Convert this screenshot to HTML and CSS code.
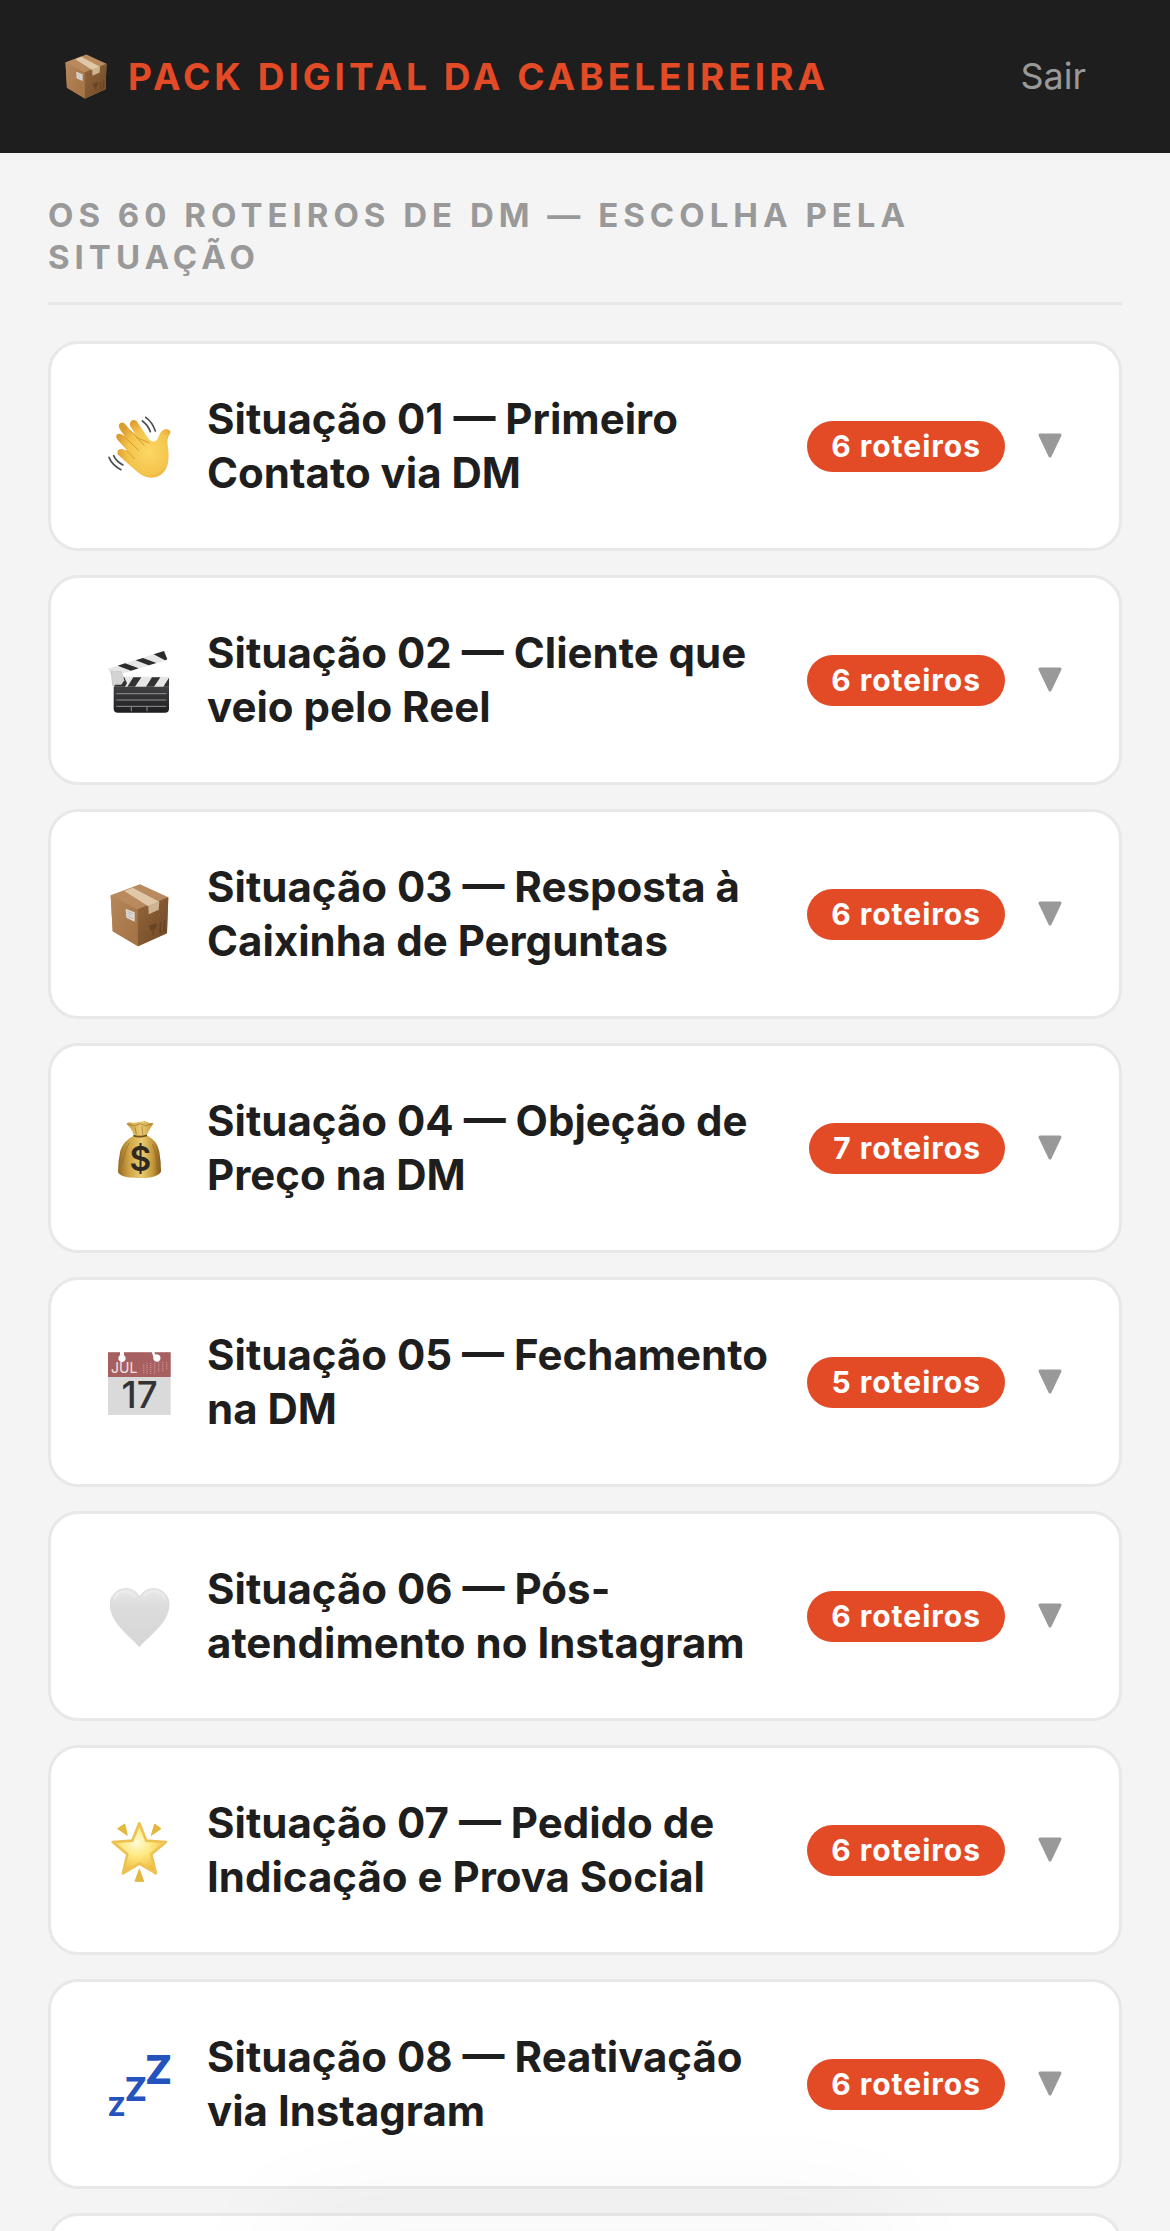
FILE: index.html
```html
<!DOCTYPE html>
<html lang="pt-BR">
  <head>
    <meta charset="UTF-8">
    <meta name="viewport" content="width=device-width, initial-scale=1">
    <title>Pack Digital da Cabeleireira</title>
    <link rel="stylesheet" href="styles.css">
  </head>
  <body>
    <!-- Shared shapes -->
    <svg class="defs" aria-hidden="true">
      <defs>
        <linearGradient id="boxLeft" x1="0" y1="0" x2="1" y2="1">
          <stop offset="0" stop-color="#b5875a"/>
          <stop offset="1" stop-color="#a27144"/>
        </linearGradient>
        <linearGradient id="boxRight" x1="0" y1="0" x2="1" y2="1">
          <stop offset="0" stop-color="#94663c"/>
          <stop offset="1" stop-color="#6e4825"/>
        </linearGradient>
      </defs>
      <symbol id="box" viewBox="60 56 177 190">
        <path d="M62 91L150 58L235 97L231 205L144 244L68 199Z" fill="#b88a5e"/>
        <path d="M62 91L142 133L144 244L68 199Z" fill="url(#boxLeft)"/>
        <path d="M142 133L235 97L231 205L144 244Z" fill="url(#boxRight)"/>
        <path d="M103 78L128 68L208 110L175 124Z" fill="#dfc7a8"/>
        <path d="M175 123L208 109L206 134L176 148Z" fill="#cdb491"/>
        <path d="M107 131L134 142V170L109 158Z" fill="#dedbd6"/>
        <path d="M112 139L130 147M112 145L124 151M112 153L130 161" stroke="#a8a49e" stroke-width="2"/>
        <g opacity=".6">
          <path d="M177 182L201 174C200 188 195 194 191 196V207L197 206L185 212L188 208V197C181 196 177 190 177 182Z" fill="#58391e"/>
          <path d="M212 170L210 200M224 165L222 196M208 203L215 200M220 198L226 195" stroke="#58391e" stroke-width="4"/>
        </g>
      </symbol>
      <symbol id="arrow" viewBox="0 0 30 30">
        <path d="M5 4H25L15 25Z" fill="currentColor" stroke="currentColor" stroke-width="3" stroke-linejoin="round"/>
      </symbol>
    </svg>

    <header class="header">
      <div class="brand">
        <svg class="brand-icon" aria-hidden="true"><use href="#box"/></svg>
        <span>PACK DIGITAL DA CABELEIREIRA</span>
      </div>
      <button class="logout" type="button">Sair</button>
    </header>

    <main class="content">
      <h1 class="section-title">OS 60 ROTEIROS DE DM — ESCOLHA PELA SITUAÇÃO</h1>

      <div class="list">
        <button class="card" type="button" aria-expanded="false">
          <svg class="icon" viewBox="195 240 216 216" aria-hidden="true">
            <defs>
              <radialGradient id="hand" cx=".6" cy=".55" r=".6">
                <stop offset="0" stop-color="#fbd864"/>
                <stop offset=".65" stop-color="#f4c44c"/>
                <stop offset="1" stop-color="#dc9e30"/>
              </radialGradient>
            </defs>
            <path d="M240 280C247 275 253 279 257 284L276 306L287 314L270 287C268 272 280 265 290 274L322 321C329 332 338 338 347 333C356 328 357 304 372 299C384 295 394 302 391 309C385 319 381 328 383 345C387 370 388 399 378 416C367 438 344 446 322 442C307 438 294 428 281 416L235 375C227 363 238 353 249 358L262 362L233 330C224 318 230 308 242 312L254 318L241 300C235 291 235 284 240 280Z" fill="url(#hand)"/>
            <path d="M272 302L312 345M256 323L296 361M260 363L284 386M290 323L327 338" fill="none" stroke="#d99a32" stroke-width="3" stroke-linecap="round"/>
            <path d="M307 273Q323 284 331 305M317 262Q337 276 346 303M221 377Q229 395 249 405M207 382Q217 406 243 419" fill="none" stroke="#4c4c50" stroke-width="5" stroke-linecap="round"/>
          </svg>
          <span class="title">Situação 01 — Primeiro Contato via DM</span>
          <span class="badge">6 roteiros</span>
          <svg class="arrow" aria-hidden="true"><use href="#arrow"/></svg>
        </button>

        <button class="card" type="button" aria-expanded="false">
          <svg class="icon" viewBox="45 42 216 216" aria-hidden="true">
            <defs>
              <linearGradient id="slate" x1="0" y1="0" x2="0" y2="1">
                <stop offset="0" stop-color="#414143"/>
                <stop offset="1" stop-color="#1e1e20"/>
              </linearGradient>
            </defs>
            <path d="M54 116L222 63L232 90L66 140Z" fill="#e6e6e6"/>
            <path d="M83 107L105 100L146 115L123 122ZM137 91L159 84L199 99L176 106ZM191 73L222 63L232 88L225 91Z" fill="#2b2b2d"/>
            <path d="M62 122L94 124L106 152L100 167L67 168Z" fill="#c9c9ca"/>
            <path d="M70 168V140H238V172H72Z" fill="#e6e6e6"/>
            <path d="M112 170L130 142H154L135 170ZM168 170L186 142H211L192 170ZM220 170L237 143V170ZM84 142H103L111 160L105 170H72Z" fill="#323234"/>
            <path d="M66 124L96 127L103 151L94 164L69 164Z" fill="#d3d3d4"/>
            <path d="M71 170H237V236Q237 248 225 248H84Q71 248 71 236Z" fill="url(#slate)"/>
            <path d="M79 191H229M79 210H229M79 229H229M124 229V244M171 229V244" stroke="#929292" stroke-width="3"/>
          </svg>
          <span class="title">Situação 02 — Cliente que veio pelo Reel</span>
          <span class="badge">6 roteiros</span>
          <svg class="arrow" aria-hidden="true"><use href="#arrow"/></svg>
        </button>

        <button class="card" type="button" aria-expanded="false">
          <svg class="icon" viewBox="45 39 216 216" aria-hidden="true">
            <use href="#box" x="60" y="56" width="177" height="190"/>
          </svg>
          <span class="title">Situação 03 — Resposta à Caixinha de Perguntas</span>
          <span class="badge">6 roteiros</span>
          <svg class="arrow" aria-hidden="true"><use href="#arrow"/></svg>
        </button>

        <button class="card" type="button" aria-expanded="false">
          <svg class="icon" viewBox="45 36 216 216" aria-hidden="true">
            <defs>
              <linearGradient id="bag">
                <stop offset="0" stop-color="#94671f"/>
                <stop offset=".25" stop-color="#cda345"/>
                <stop offset=".55" stop-color="#ebcb72"/>
                <stop offset=".8" stop-color="#c59a3c"/>
                <stop offset="1" stop-color="#835818"/>
              </linearGradient>
            </defs>
            <path d="M109 72Q116 63 128 69L151 65L164 63L178 69L191 70Q179 86 170 106Q202 122 208 155Q213 184 213 215Q203 234 151 234Q93 235 84 217Q84 181 91 152Q102 120 132 107Q126 85 109 72Z" fill="url(#bag)"/>
            <path d="M130 107Q149 113 171 106" fill="none" stroke="#735019" stroke-width="5"/>
            <path d="M113 72L132 78L150 71L167 77L187 71M135 82L139 103M156 78L158 104M118 129Q103 153 98 190M187 132Q201 164 202 207" fill="none" stroke="#8c6424" stroke-width="3" opacity=".6"/>
            <text class="money" x="151" y="213" text-anchor="middle">$</text>
          </svg>
          <span class="title">Situação 04 — Objeção de Preço na DM</span>
          <span class="badge">7 roteiros</span>
          <svg class="arrow" aria-hidden="true"><use href="#arrow"/></svg>
        </button>

        <button class="card" type="button" aria-expanded="false">
          <svg class="icon" viewBox="45 33 216 216" aria-hidden="true">
            <path d="M54 52H242V240H54Z" fill="#dadada"/>
            <path d="M54 52H242V126H54Z" fill="#a85f60"/>
            <path d="M90 50H102V61A11 11 0 1 1 90 61ZM185 50H193L196 59A11 11 0 1 1 190 66Z" fill="#fff"/>
            <path d="M161 88V116M171 85V117M182 84V117M194 83V116M206 82V111M218 82V110M230 82V106" stroke="#c79494" stroke-width="4" stroke-dasharray="3 3"/>
            <text class="month" x="63" y="115">JUL</text>
            <text class="day" x="149" y="220" text-anchor="middle">17</text>
          </svg>
          <span class="title">Situação 05 — Fechamento na DM</span>
          <span class="badge">5 roteiros</span>
          <svg class="arrow" aria-hidden="true"><use href="#arrow"/></svg>
        </button>

        <button class="card" type="button" aria-expanded="false">
          <svg class="icon" viewBox="45 30 216 216" aria-hidden="true">
            <defs>
              <linearGradient id="heart" x1="0" y1="0" x2="0" y2="1">
                <stop offset="0" stop-color="#e9e9e9"/>
                <stop offset=".3" stop-color="#dcdcdc"/>
                <stop offset="1" stop-color="#d6d6d6"/>
              </linearGradient>
            </defs>
            <path d="M148 230C118 196 61 158 61 103C61 53 126 38 149 81C172 38 237 53 237 103C237 158 178 196 148 230Z" fill="url(#heart)" stroke="#d0d0d0" stroke-width="2"/>
            <path d="M74 86C84 62 117 56 134 80M164 78C181 56 215 61 224 86" fill="none" stroke="#ededed" stroke-width="5" stroke-linecap="round"/>
          </svg>
          <span class="title">Situação 06 — Pós-atendimento no Instagram</span>
          <span class="badge">6 roteiros</span>
          <svg class="arrow" aria-hidden="true"><use href="#arrow"/></svg>
        </button>

        <button class="card" type="button" aria-expanded="false">
          <svg class="icon" viewBox="45 42 216 216" aria-hidden="true">
            <defs>
              <radialGradient id="star" cx=".45" cy=".38" r=".65">
                <stop offset="0" stop-color="#fffbd8"/>
                <stop offset=".4" stop-color="#feea86"/>
                <stop offset="1" stop-color="#efb331"/>
              </radialGradient>
            </defs>
            <path d="M148 70L169 122L228 126L184 163L198 220L148 191L99 220L112 163L68 126L127 122Z" fill="url(#star)" stroke="#eec252" stroke-width="8" stroke-linejoin="round"/>
            <path d="M83 86L104 72L112 106ZM194 72L213 86L184 106ZM148 208L161 244H135Z" fill="#e3b83f" stroke="#e3b83f" stroke-width="3" stroke-linejoin="round"/>
          </svg>
          <span class="title">Situação 07 — Pedido de Indicação e Prova Social</span>
          <span class="badge">6 roteiros</span>
          <svg class="arrow" aria-hidden="true"><use href="#arrow"/></svg>
        </button>

        <button class="card" type="button" aria-expanded="false">
          <svg class="icon sleep" viewBox="45 39 216 216" aria-hidden="true">
            <text x="53" y="243" font-size="78">Z</text>
            <text x="104" y="198" font-size="98">Z</text>
            <text x="165" y="147" font-size="120">Z</text>
          </svg>
          <span class="title">Situação 08 — Reativação via Instagram</span>
          <span class="badge">6 roteiros</span>
          <svg class="arrow" aria-hidden="true"><use href="#arrow"/></svg>
        </button>

        <div class="card"></div>
      </div>
    </main>

    <div class="bottom-shadow"></div>
  </body>
</html>
```

FILE: styles.css
```css
* {
  box-sizing: border-box;
  margin: 0;
  padding: 0;
}

body {
  height: 100vh;
  overflow: hidden;
  background: #f4f4f4;
  color: #1e1e1e;
  font-family: Inter, 'Liberation Sans', sans-serif;
}

button {
  font-family: inherit;
  border: none;
  cursor: pointer;
}

.defs {
  position: absolute;
  width: 0;
  height: 0;
}

/* Header */
.header {
  display: flex;
  align-items: center;
  justify-content: space-between;
  padding: 54px 84px 54px 64px;
  background: #1e1e1e;
}

.brand {
  display: flex;
  align-items: center;
  gap: 20px;
  color: #e34a26;
  font-size: 37px;
  font-weight: 700;
  line-height: 45px;
  letter-spacing: 4px;
}

.brand-icon {
  width: 44px;
  height: 45px;
}

.logout {
  background: transparent;
  color: #999;
  font-size: 36px;
  line-height: 45px;
}

/* Content */
.content {
  padding: 41px 48px;
}

.section-title {
  padding-bottom: 24px;
  margin-bottom: 36px;
  border-bottom: 3px solid #e8e8e8;
  color: #999;
  font-size: 33px;
  font-weight: 700;
  line-height: 42px;
  letter-spacing: 5px;
}

.list {
  display: flex;
  flex-direction: column;
  gap: 24px;
}

.card {
  display: flex;
  align-items: center;
  gap: 30px;
  width: 100%;
  padding: 48px 54px;
  background: #fff;
  border: 3px solid #e8e8e8;
  border-radius: 30px;
  color: inherit;
  text-align: left;
}

.icon {
  flex: none;
  width: 72px;
  height: 72px;
  overflow: visible;
}

.title {
  flex: 1;
  font-size: 42px;
  font-weight: 700;
  line-height: 54px;
}

.badge {
  flex: none;
  padding: 6px 24px;
  background: #e34a26;
  border-radius: 30px;
  color: #fff;
  font-size: 30px;
  font-weight: 700;
  line-height: 39px;
  letter-spacing: 1px;
}

.arrow {
  flex: none;
  width: 30px;
  height: 30px;
  color: #999;
}

/* Icon lettering */
.money {
  font-size: 100px;
  font-weight: 600;
  fill: #2e2922;
}

.month {
  font-size: 42px;
  fill: #f3e4e4;
}

.day {
  font-size: 110px;
  font-weight: 500;
  fill: #333;
}

.sleep {
  font-weight: 800;
  fill: #2453bd;
}

.bottom-shadow {
  position: fixed;
  left: 24%;
  right: 24%;
  bottom: -60px;
  height: 60px;
  border-radius: 30px;
  box-shadow: 0 0 120px 12px rgba(0, 0, 0, 0.05);
  pointer-events: none;
}
```
